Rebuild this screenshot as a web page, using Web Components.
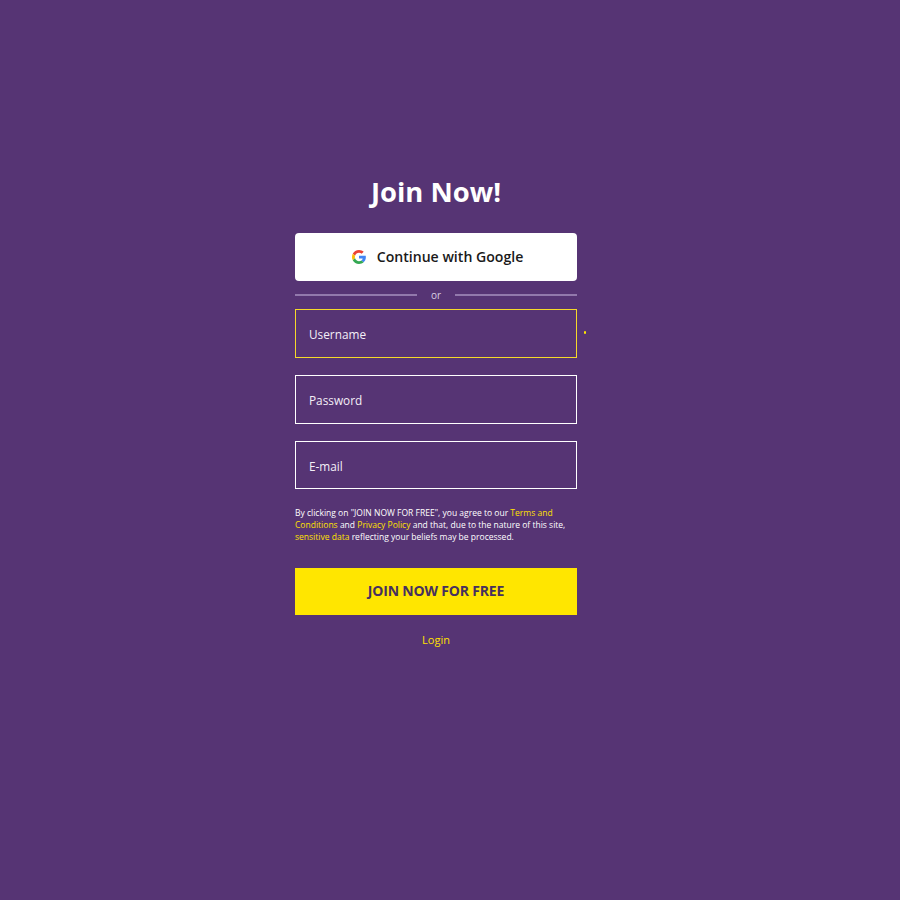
<!DOCTYPE html>
<html lang="en">
<head>
<meta charset="utf-8">
<title>Join Now!</title>
<style>
  html, body { margin: 0; height: 100%; }
  body { background: #563474; font-family: "Open Sans", sans-serif; }
</style>
</head>
<body>
<join-page>
  <join-form>
    <google-button>Continue with Google</google-button>
    <or-divider>or</or-divider>
    <form-field active>Username</form-field>
    <form-field>Password</form-field>
    <form-field last>E-mail</form-field>
    <legal-note>By clicking on "JOIN NOW FOR FREE", you agree to our <a href="#">Terms and Conditions</a> and <a href="#">Privacy Policy</a> and that, due to the nature of this site, <a href="#">sensitive data</a> reflecting your beliefs may be processed.</legal-note>
    <submit-button>JOIN NOW FOR FREE</submit-button>
    <login-link>Login</login-link>
  </join-form>
</join-page>

<script>
class JoinPage extends HTMLElement {
  constructor () {
    super()
    this.attachShadow({ mode: 'open' }).innerHTML = `
      <style>
        :host { display: block; box-sizing: border-box; height: 900px; padding: 173px 0 0 295px; background: #563474; }
      </style>
      <slot></slot>`
  }
}

class JoinForm extends HTMLElement {
  constructor () {
    super()
    this.attachShadow({ mode: 'open' }).innerHTML = `
      <style>
        :host { display: flex; flex-direction: column; width: 282px; color: #fff; }
        h1 { margin: 0 0 21px; height: 39px; font: 700 27.4px/37px "Open Sans", sans-serif; text-align: center; color: #fff; }
      </style>
      <h1>Join Now!</h1>
      <slot></slot>`
  }
}

class GoogleButton extends HTMLElement {
  constructor () {
    super()
    this.attachShadow({ mode: 'open' }).innerHTML = `
      <style>
        :host { display: flex; align-items: center; justify-content: center; gap: 11px; box-sizing: border-box; height: 48px; padding-left: 3px; background: #fff; border-radius: 4px; color: #1a1a1a; font: 600 14.1px/20px "Open Sans", sans-serif; }
        svg { width: 14px; height: 14px; flex: none; }
      </style>
      <svg viewBox="0 0 48 48">
        <path fill="#EA4335" d="M24 9.500c3.500 0 6.700 1.200 9.200 3.600l6.900-6.900C35.900 2.400 30.400 0 24 0 14.600 0 6.500 5.400 2.600 13.200l8 6.200C12.500 13.600 17.800 9.500 24 9.500z"/>
        <path fill="#4285F4" d="M47.500 24.500c0-1.600-.1-3.100-.4-4.500H24v9h12.700c-.6 2.900-2.200 5.400-4.700 7.100l7.700 6c4.500-4.200 7.800-10.300 7.800-17.600z"/>
        <path fill="#FBBC05" d="M10.500 28.600c-.5-1.400-.8-3-.8-4.600s.3-3.200.8-4.600l-8-6.200C.9 16.500 0 20.100 0 24s.9 7.500 2.600 10.800l7.900-6.200z"/>
        <path fill="#34A853" d="M24 48c6.500 0 11.900-2.100 15.900-5.800l-7.700-6c-2.200 1.400-4.900 2.300-8.200 2.300-6.200 0-11.500-4.200-13.400-9.800l-8 6.200C6.500 42.600 14.600 48 24 48z"/>
      </svg>
      <span><slot></slot></span>`
  }
}

class OrDivider extends HTMLElement {
  constructor () {
    super()
    this.attachShadow({ mode: 'open' }).innerHTML = `
      <style>
        :host { display: flex; align-items: center; gap: 14px; height: 28px; color: #d9cfe3; font: 400 10px/14px "Open Sans", sans-serif; }
        i { flex: 1; height: 2px; background: #9279ac; }
        span { width: 10px; text-align: center; }
      </style>
      <i></i><span><slot></slot></span><i></i>`
  }
}

class FormField extends HTMLElement {
  constructor () {
    super()
    this.attachShadow({ mode: 'open' }).innerHTML = `
      <style>
        :host { position: relative; display: flex; align-items: center; box-sizing: border-box; height: 49px; margin-bottom: 17px; padding: 0 13px; border: 1px solid #fff; color: #f4eff7; font: 500 11.8px/18px "Open Sans", sans-serif; }
        :host([active]) { border-color: #f5d92a; }
        :host([last]) { height: 48px; margin-bottom: 18px; padding-top: 1px; }
        .mark { display: none; position: absolute; top: 21px; right: -10px; width: 2.500px; height: 3px; border-radius: 1px; background: #ffe600; }
        :host([active]) .mark { display: block; }
      </style>
      <slot></slot><span class="mark"></span>`
  }
}

class LegalNote extends HTMLElement {
  constructor () {
    super()
    this.attachShadow({ mode: 'open' }).innerHTML = `
      <style>
        :host { display: block; margin-bottom: 25px; color: #fff; font: 500 8.52px/12px "Open Sans", sans-serif; }
        ::slotted(a) { color: #ffe000; text-decoration: none; }
      </style>
      <slot></slot>`
  }
}

class SubmitButton extends HTMLElement {
  constructor () {
    super()
    this.attachShadow({ mode: 'open' }).innerHTML = `
      <style>
        :host { display: flex; align-items: center; justify-content: center; box-sizing: border-box; height: 47px; padding-bottom: 1px; background: #ffe600; color: #46305f; font: 700 14px/20px "Open Sans", sans-serif; letter-spacing: -0.18px; }
      </style>
      <slot></slot>`
  }
}

class LoginLink extends HTMLElement {
  constructor () {
    super()
    this.attachShadow({ mode: 'open' }).innerHTML = `
      <style>
        :host { display: block; margin-top: 16px; text-align: center; color: #ffe000; font: 500 11px/18px "Open Sans", sans-serif; }
      </style>
      <slot></slot>`
  }
}

customElements.define('join-page', JoinPage)
customElements.define('join-form', JoinForm)
customElements.define('google-button', GoogleButton)
customElements.define('or-divider', OrDivider)
customElements.define('form-field', FormField)
customElements.define('legal-note', LegalNote)
customElements.define('submit-button', SubmitButton)
customElements.define('login-link', LoginLink)
</script>
</body>
</html>
